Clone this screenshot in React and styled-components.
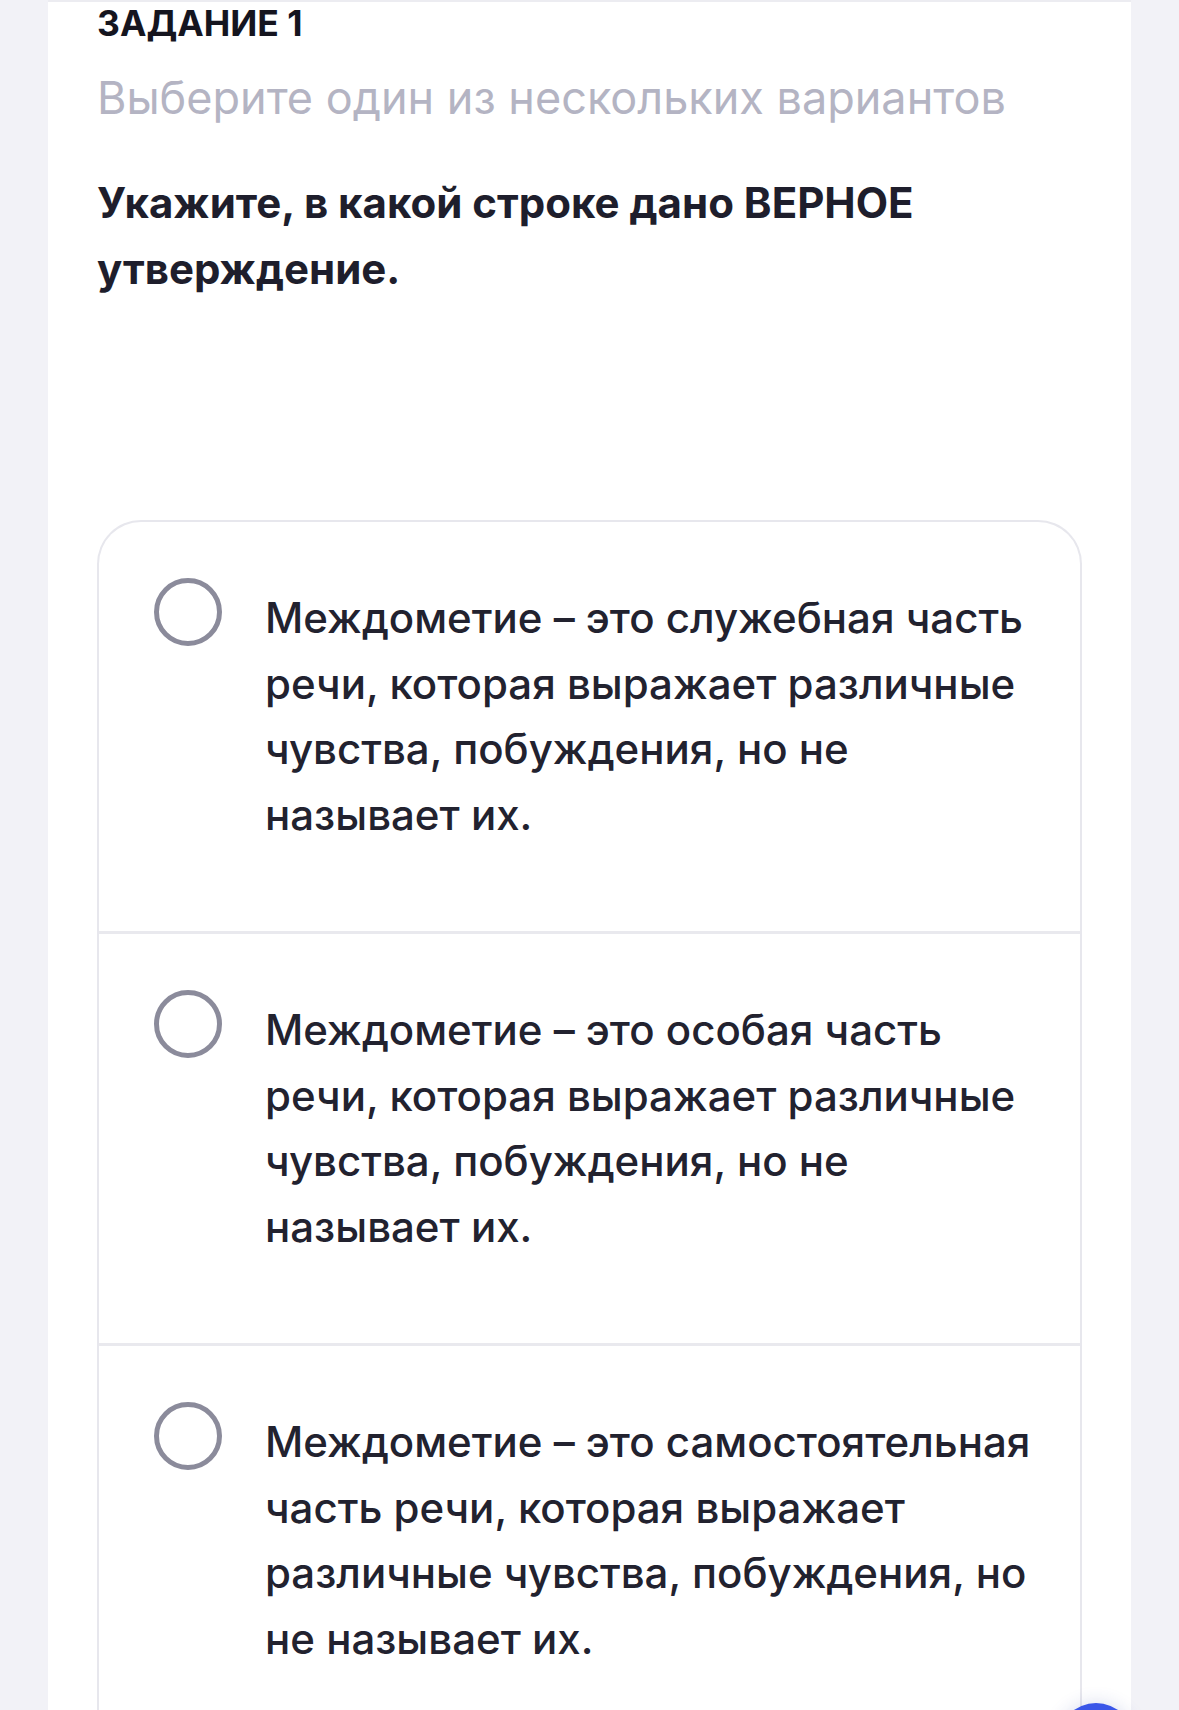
import React from 'react';
import styled, { createGlobalStyle } from 'styled-components';

const GlobalStyle = createGlobalStyle`
  html, body {
    margin: 0;
    padding: 0;
    background: #f2f2f7;
    font-family: Inter, "Noto Sans", "Liberation Sans", sans-serif;
  }
`;

const Page = styled.div`
  min-height: 1710px;
  background: #f2f2f7;
  padding: 0 48px;
  position: relative;
  overflow: hidden;
`;

const Card = styled.div`
  background: #ffffff;
  border-top: 2px solid #ececf1;
  min-height: 1710px;
  padding: 0 49px;
`;

const TaskLabel = styled.div`
  font-size: 35.5px;
  font-weight: 700;
  line-height: 44px;
  color: #15151f;
`;

const Hint = styled.div`
  margin-top: 25px;
  font-size: 45px;
  font-weight: 400;
  line-height: 54px;
  color: #b4b4c3;
`;

const Question = styled.div`
  margin-top: 45px;
  font-size: 42px;
  font-weight: 700;
  line-height: 66px;
  color: #1e1e2c;
  max-width: 900px;
`;

const Options = styled.div`
  margin-top: 218px;
  border: 2px solid #e7e7ed;
  border-bottom: none;
  border-radius: 44px 44px 0 0;
  overflow: hidden;
`;

const Option = styled.label`
  display: flex;
  align-items: flex-start;
  gap: 43px;
  padding: 63px 40px 84px 55px;
  border-top: ${(p) => (p.first ? 'none' : '3px solid #e9e9ee')};
  cursor: pointer;
`;

const Radio = styled.span`
  flex: none;
  width: 68px;
  height: 68px;
  box-sizing: border-box;
  border-radius: 50%;
  border: 5px solid #8b8b9b;
  margin-top: -7px;
`;

const OptionText = styled.span`
  font-size: 42px;
  font-weight: 500;
  line-height: 65.5px;
  color: #22222f;
`;

const Fab = styled.div`
  position: absolute;
  left: 1058px;
  top: 1703px;
  width: 76px;
  height: 76px;
  border-radius: 50%;
  background: #3a56e8;
  box-shadow: 0 0 18px rgba(40, 60, 160, 0.18);
`;

const answers = [
  'Междометие – это служебная часть речи, которая выражает различные чувства, побуждения, но не называет их.',
  'Междометие – это особая часть речи, которая выражает различные чувства, побуждения, но не называет их.',
  'Междометие – это самостоятельная часть речи, которая выражает различные чувства, побуждения, но не называет их.',
];

export default function App() {
  return (
    <>
      <GlobalStyle />
      <Page>
        <Card>
          <TaskLabel>ЗАДАНИЕ 1</TaskLabel>
          <Hint>Выберите один из нескольких вариантов</Hint>
          <Question>Укажите, в какой строке дано ВЕРНОЕ утверждение.</Question>
          <Options>
            {answers.map((a, i) => (
              <Option key={i} first={i === 0}>
                <Radio />
                <OptionText>{a}</OptionText>
              </Option>
            ))}
          </Options>
        </Card>
        <Fab />
      </Page>
    </>
  );
}
